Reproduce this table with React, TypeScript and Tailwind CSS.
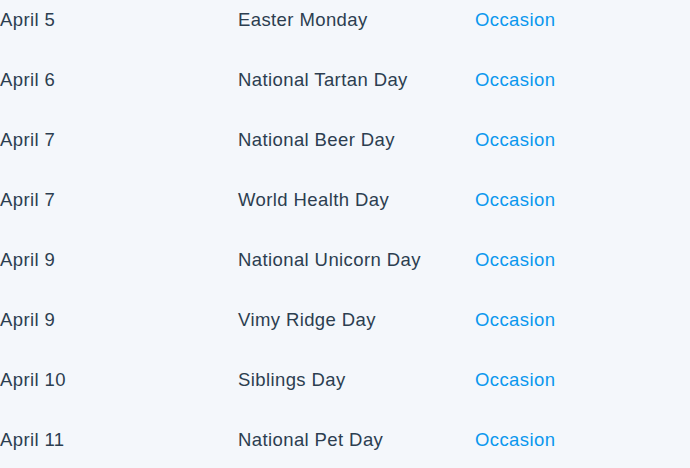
const rows = [
  { date: "April 5", name: "Easter Monday" },
  { date: "April 6", name: "National Tartan Day" },
  { date: "April 7", name: "National Beer Day" },
  { date: "April 7", name: "World Health Day" },
  { date: "April 9", name: "National Unicorn Day" },
  { date: "April 9", name: "Vimy Ridge Day" },
  { date: "April 10", name: "Siblings Day" },
  { date: "April 11", name: "National Pet Day" },
];

export default function App() {
  return (
    <div className="w-[690px] h-[468px] overflow-hidden bg-[#f4f7fb] font-['Liberation_Sans',Arial,sans-serif] text-[18.5px] tracking-[0.4px] text-[#2c3e50]">
      {rows.map((r, i) => (
        <div key={i} className="flex h-[60px] pt-[8px] leading-[24px]">
          <div className="w-[238px]">{r.date}</div>
          <div className="w-[237px]">{r.name}</div>
          <div className="text-[#0a97ee]">Occasion</div>
        </div>
      ))}
    </div>
  );
}
